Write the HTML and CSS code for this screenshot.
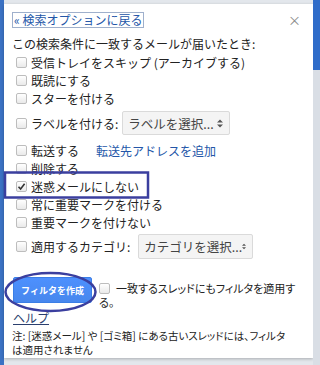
FILE: index.html
```html
<!DOCTYPE html>
<html lang="ja">
<head>
  <meta charset="UTF-8" />
  <meta name="viewport" content="width=device-width, initial-scale=1.0"/>
  <title>フィルタを作成</title>
  <link rel="stylesheet" href="styles.css">
</head>
<body>
  <div class="screen">
    <div class="edge-left"></div>

    <div class="dialog">
      <div class="head">
        <a href="#" class="back">« 検索オプションに戻る</a>
        <span class="close">×</span>
      </div>

      <p class="intro">この検索条件に一致するメールが届いたとき:</p>

      <ul class="actions">
        <li class="row"><span class="cb"></span>受信トレイをスキップ (アーカイブする)</li>
        <li class="row"><span class="cb"></span>既読にする</li>
        <li class="row"><span class="cb"></span>スターを付ける</li>
        <li class="row row-select">
          <span class="cb"></span>ラベルを付ける:
          <span class="select select-label">ラベルを選択...
            <svg class="arrows" width="6" height="9" viewBox="0 0 6 9"><path d="M0 3.5 L3 0.5 L6 3.5 Z M0 5.5 L3 8.5 L6 5.5 Z" fill="#555"/></svg>
          </span>
        </li>
        <li class="row row-forward"><span class="cb"></span>転送する<a href="#" class="link-forward">転送先アドレスを追加</a></li>
        <li class="row"><span class="cb"></span>削除する</li>
        <li class="row"><span class="cb checked"><svg width="9" height="9" viewBox="0 0 9 9"><path d="M1.5 4.8 L3.6 7 L7.6 1.8" fill="none" stroke="#333" stroke-width="1.6"/></svg></span>迷惑メールにしない</li>
        <li class="row"><span class="cb"></span>常に重要マークを付ける</li>
        <li class="row"><span class="cb"></span>重要マークを付けない</li>
        <li class="row row-select row-category">
          <span class="cb"></span>適用するカテゴリ:
          <span class="select select-category">カテゴリを選択...
            <svg class="arrows" width="6" height="9" viewBox="0 0 6 9"><path d="M0 3.5 L3 0.5 L6 3.5 Z M0 5.5 L3 8.5 L6 5.5 Z" fill="#555"/></svg>
          </span>
        </li>
      </ul>

      <div class="submit">
        <button class="btn-create">フィルタを作成</button>
        <p class="also"><span class="cb"></span>一致するスレッドにもフィルタを適用す<br>る。</p>
      </div>

      <a href="#" class="help">ヘルプ</a>
      <p class="note">注: [迷惑メール] や [ゴミ箱] にある古いスレッドには、フィルタ<br>は適用されません</p>
    </div>

    <div class="edge-right"></div>

    <!-- 手書きの注釈 -->
    <svg class="marks" width="320" height="365" viewBox="0 0 320 365">
      <rect x="5" y="172.5" width="143" height="25" fill="none" stroke="#3b3f9f" stroke-width="2.5"/>
      <ellipse cx="50.5" cy="292" rx="45" ry="19" fill="none" stroke="#3b3f9f" stroke-width="2.5"/>
    </svg>
  </div>
</body>
</html>
```

FILE: styles.css
```css
body {
  margin: 0;
  font-family: "Noto Sans CJK JP", "Noto Sans", sans-serif;
  color: #222;
}

.screen {
  position: relative;
  width: 320px;
  height: 365px;
  display: flex;
  background-color: #e3e7ec;
  overflow: hidden;
}

.edge-left {
  width: 4px;
  background-color: #3b72c4;
}

.edge-right {
  width: 7px;
  background: linear-gradient(#2f6cc9 0, #2f6cc9 70px, #d9dee5 70px);
}

.dialog {
  flex: 1;
  margin: 4px 0 7px;
  padding: 8px 8px 0 8px;
  background-color: #fff;
  box-shadow: 0 1px 3px rgba(0, 0, 0, 0.25);
  font-size: 12px;
}

.head {
  display: flex;
  justify-content: space-between;
  height: 16px;
}

.back {
  display: inline-block;
  border: 1px solid #9fb0cc;
  padding: 0 1px;
  line-height: 14px;
  font-size: 12px;
  color: #2356a8;
  text-decoration: none;
}

.close {
  color: #888;
  font-size: 13px;
  line-height: 14px;
  margin-right: 4px;
  margin-top: 1px;
}

.intro {
  margin: 7px 0 0;
  line-height: 18px;
}

.actions {
  list-style: none;
  margin: 0;
  padding: 0;
}

.row {
  display: flex;
  align-items: center;
  height: 18px;
  white-space: nowrap;
}

.cb {
  display: inline-flex;
  align-items: center;
  justify-content: center;
  box-sizing: border-box;
  width: 11px;
  height: 11px;
  margin: 0 4px 0 4px;
  border: 1px solid #bdbdbd;
  border-radius: 2px;
  background: linear-gradient(#fff, #e9e9e9);
  flex-shrink: 0;
}

.row-select {
  height: 24px;
  margin-top: 4px;
}

.row-forward {
  margin-top: 6px;
}

.row-category {
  height: 25px;
  margin-top: 3px;
}

.select {
  display: inline-flex;
  align-items: center;
  justify-content: space-between;
  box-sizing: border-box;
  height: 100%;
  padding: 0 6px 0 5px;
  background-color: #f4f4f4;
  border: 1px solid #dadada;
  border-radius: 2px;
  color: #444;
  font-size: 12.5px;
}

.select-label {
  width: 108px;
  margin-left: 4px;
}

.select-category {
  width: 115px;
  margin-left: 8px;
}

.link-forward {
  margin-left: 17px;
  color: #2356a8;
  text-decoration: none;
}

.submit {
  display: flex;
  align-items: flex-start;
  height: 32px;
  margin-top: 18px;
}

.btn-create {
  width: 79px;
  height: 26px;
  margin-left: 1px;
  padding: 0;
  border: 1px solid #3b7ee6;
  border-radius: 2px;
  background: linear-gradient(#4d90fe, #4787ed);
  color: #fff;
  font-family: inherit;
  font-size: 9px;
  font-weight: bold;
}

.also {
  margin: 4px 0 0 7px;
  font-size: 11px;
  line-height: 14px;
  font-feature-settings: "palt";
}

.also .cb {
  margin: 0 6px 0 0;
  vertical-align: -1px;
}

.help {
  display: inline-block;
  margin: 1px 0 0 1px;
  line-height: 14px;
  color: #2b3f6e;
}

.note {
  margin: 3px 0 0;
  font-size: 10.5px;
  line-height: 14px;
  white-space: nowrap;
  font-feature-settings: "palt";
}

.marks {
  position: absolute;
  left: 0;
  top: 0;
  pointer-events: none;
}
```
